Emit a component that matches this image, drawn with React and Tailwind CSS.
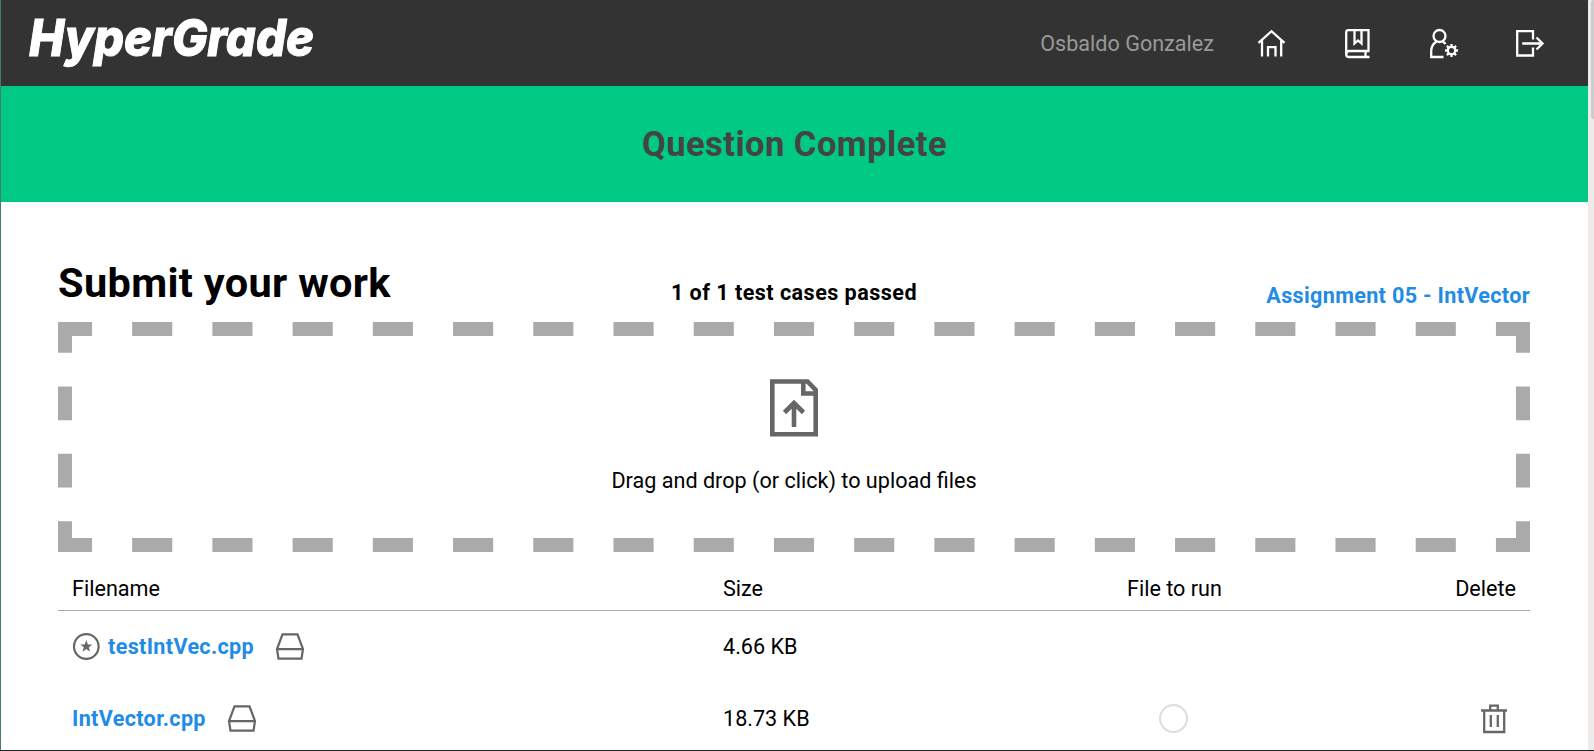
function Logo() {
  return (
    <svg className="block h-[86px] w-[360px] overflow-visible" viewBox="0 0 360 86" role="img">
      <text x="28" y="56.300" textLength="285" lengthAdjust="spacingAndGlyphs" strokeWidth="1" strokeLinejoin="miter" className="fill-white stroke-white font-['Inter',sans-serif] text-[51px] font-extrabold italic">
        HyperGrade
      </text>
    </svg>
  );
}

const Svg = ({ className, children, viewBox = "0 0 32 32" }) => (
  <svg className={className} viewBox={viewBox} fill="none" stroke="currentColor" strokeWidth="2.300">
    {children}
  </svg>
);

const HomeIcon = () => (
  <Svg className="size-8">
    <path d="M2.500 15.800 15.500 4.200 28.500 15.800M6 13V29.500M25.200 13V29.500M12 29.500V20.200h7.500V29.500" />
  </Svg>
);
const BookIcon = () => (
  <Svg className="size-8">
    <path d="M26.500 24V3.200H6.500Q4.200 3.200 4.200 5.500V27.500Q4.200 30 7 30H27.500M27.500 24H7Q4.500 24 4.500 27M23.500 24V30M12.500 3.200V16.500L16 13.500 19.500 16.500V3.200" />
  </Svg>
);
const UserIcon = () => (
  <Svg className="size-8">
    <circle cx="11.500" cy="9" r="6" />
    <path d="M8.500 14.500Q3.200 18 3.200 24V30H15.500M14.500 14.500Q16.500 15.500 17.500 17" />
    <circle cx="23.500" cy="23.500" r="3.700" />
    <path d="M23.500 17v3M23.500 27v3M17 23.500h3M27 23.500h3M18.900 18.900l2.100 2.100M26 26l2.100 2.100M28.100 18.900l-2.100 2.100M21 26l-2.100 2.100" />
  </Svg>
);
const ExitIcon = () => (
  <Svg className="size-8">
    <path d="M19 12.500V4.200H3.200V28.500H19V20.500M8.200 16.500H29M22.500 10.500 28.500 16.500 22.500 22.500" />
  </Svg>
);
const DriveIcon = () => (
  <Svg className="size-[30px] text-[#666]" viewBox="0 0 30 30">
    <path d="M7.500 2.300H22.500L28 17 26.500 26.700H3.500L2 17ZM2 17.200H28" strokeWidth="2.200" />
  </Svg>
);
const StarIcon = () => (
  <Svg className="size-[28px] text-[#666]" viewBox="0 0 28 28">
    <circle cx="14.300" cy="13.500" r="12.300" strokeWidth="2.200" />
    <path d="M14.300 7 15.900 11.400H20.300L16.800 14.200 18.100 18.700 14.300 16 10.500 18.700 11.800 14.200 8.300 11.400H12.700Z" fill="currentColor" stroke="none" />
  </Svg>
);
const TrashIcon = () => (
  <Svg className="h-[30px] w-[28px] text-[#666]" viewBox="0 0 28 30">
    <path d="M1 6.500H27M4.200 6.500V28H24.200V6.500M10.200 6.500V1.700H17.800V6.500M10.800 11V23M17.800 11V23" />
  </Svg>
);
const UploadIcon = () => (
  <Svg className="h-[58px] w-[48px] text-[#666]" viewBox="0 0 48 58">
    <path d="M2.300 2.500H37.500L45.700 11V55.200H2.300ZM33.300 2.500V14.500H45.700M24 48V24M14.500 33.500 24 24 33.500 33.500" strokeWidth="4.600" />
  </Svg>
);

function DashedFrame() {
  return (
    <svg className="absolute inset-0 h-[230px] w-[1472px]" viewBox="0 0 1472 230" stroke="#aaa" strokeWidth="14">
      <path d="M14 7H1458M14 223H1458" strokeDasharray="40.111" strokeDashoffset="20.056" />
      <path d="M7 14V216M1465 14V216" strokeDasharray="33.667" strokeDashoffset="16.833" />
      <path d="M0 7H14M1458 7H1472M0 223H14M1458 223H1472" />
    </svg>
  );
}

const cols = "grid grid-cols-[650px_369px_260px_165px] px-[14px]";

function FileRow({ name, size, main, removable }) {
  return (
    <div className={`${cols} h-[72px] items-center`}>
      <div className="flex items-center">
        {main && <span className="mr-2"><StarIcon /></span>}
        <a className="font-bold tracking-[0.33px] text-[#228be6]">{name}</a>
        <span className="ml-[21px]"><DriveIcon /></span>
      </div>
      <div className="pl-px">{size}</div>
      <div className="flex justify-start pl-[68px]">
        {removable && <span className="mb-[2px] size-[29px] rounded-full border-2 border-[#ddd]" />}
      </div>
      <div className="flex justify-end pr-[8px]">{removable && <TrashIcon />}</div>
    </div>
  );
}

export default function App() {
  return (
    <div className="flex h-[751px] w-[1594px] overflow-hidden border-b border-[#222] bg-white font-['Roboto',sans-serif] text-[21.6px] leading-[26px] text-black">
      <div className="w-px bg-[#447c74]" />
      <main className="w-[1587px]">
        <header className="flex h-[86px] items-center justify-between bg-[#333] pr-[42px]">
          <Logo />
          <nav className="flex items-center text-white">
            <span className="mr-[42px] pt-[2px] text-[#999]">Osbaldo Gonzalez</span>
            <div className="flex gap-[54px]">
              <HomeIcon />
              <BookIcon />
              <UserIcon />
              <ExitIcon />
            </div>
          </nav>
        </header>
        <div className="flex h-[116px] items-center justify-center bg-[#00c983] text-[34.5px] font-bold tracking-[0.48px] text-[#444]">
          Question Complete
        </div>
        <section className="pl-[57px] pr-[58px] pt-[56px]">
          <div className="grid h-[64px] grid-cols-3">
            <h1 className="pt-[8px] text-[41.5px] leading-[34px] font-bold tracking-[0.33px]">Submit your work</h1>
            <p className="pt-[22px] text-center font-bold tracking-[0.45px]">1 of 1 test cases passed</p>
            <a className="pt-[25px] text-right font-bold tracking-[0.33px] text-[#228be6]">Assignment 05 - IntVector</a>
          </div>
          <div className="relative flex h-[230px] flex-col items-center pt-[57px]">
            <DashedFrame />
            <UploadIcon />
            <p className="mt-[31px]">Drag and drop (or click) to upload files</p>
          </div>
          <div className={`${cols} h-[59px] items-center border-b border-[#aaa] pt-[15px]`}>
            <span>Filename</span>
            <span className="pl-px">Size</span>
            <span className="pl-[36px]">File to run</span>
            <span className="text-right">Delete</span>
          </div>
          <FileRow name="testIntVec.cpp" size="4.66 KB" main />
          <FileRow name="IntVector.cpp" size="18.73 KB" removable />
        </section>
      </main>
      <div className="w-[6px] bg-[#edecea] pl-[3px]">
        <div className="h-[119px] rounded-bl-[3px] rounded-tl-[3px] bg-[#ccc]" />
      </div>
    </div>
  );
}
